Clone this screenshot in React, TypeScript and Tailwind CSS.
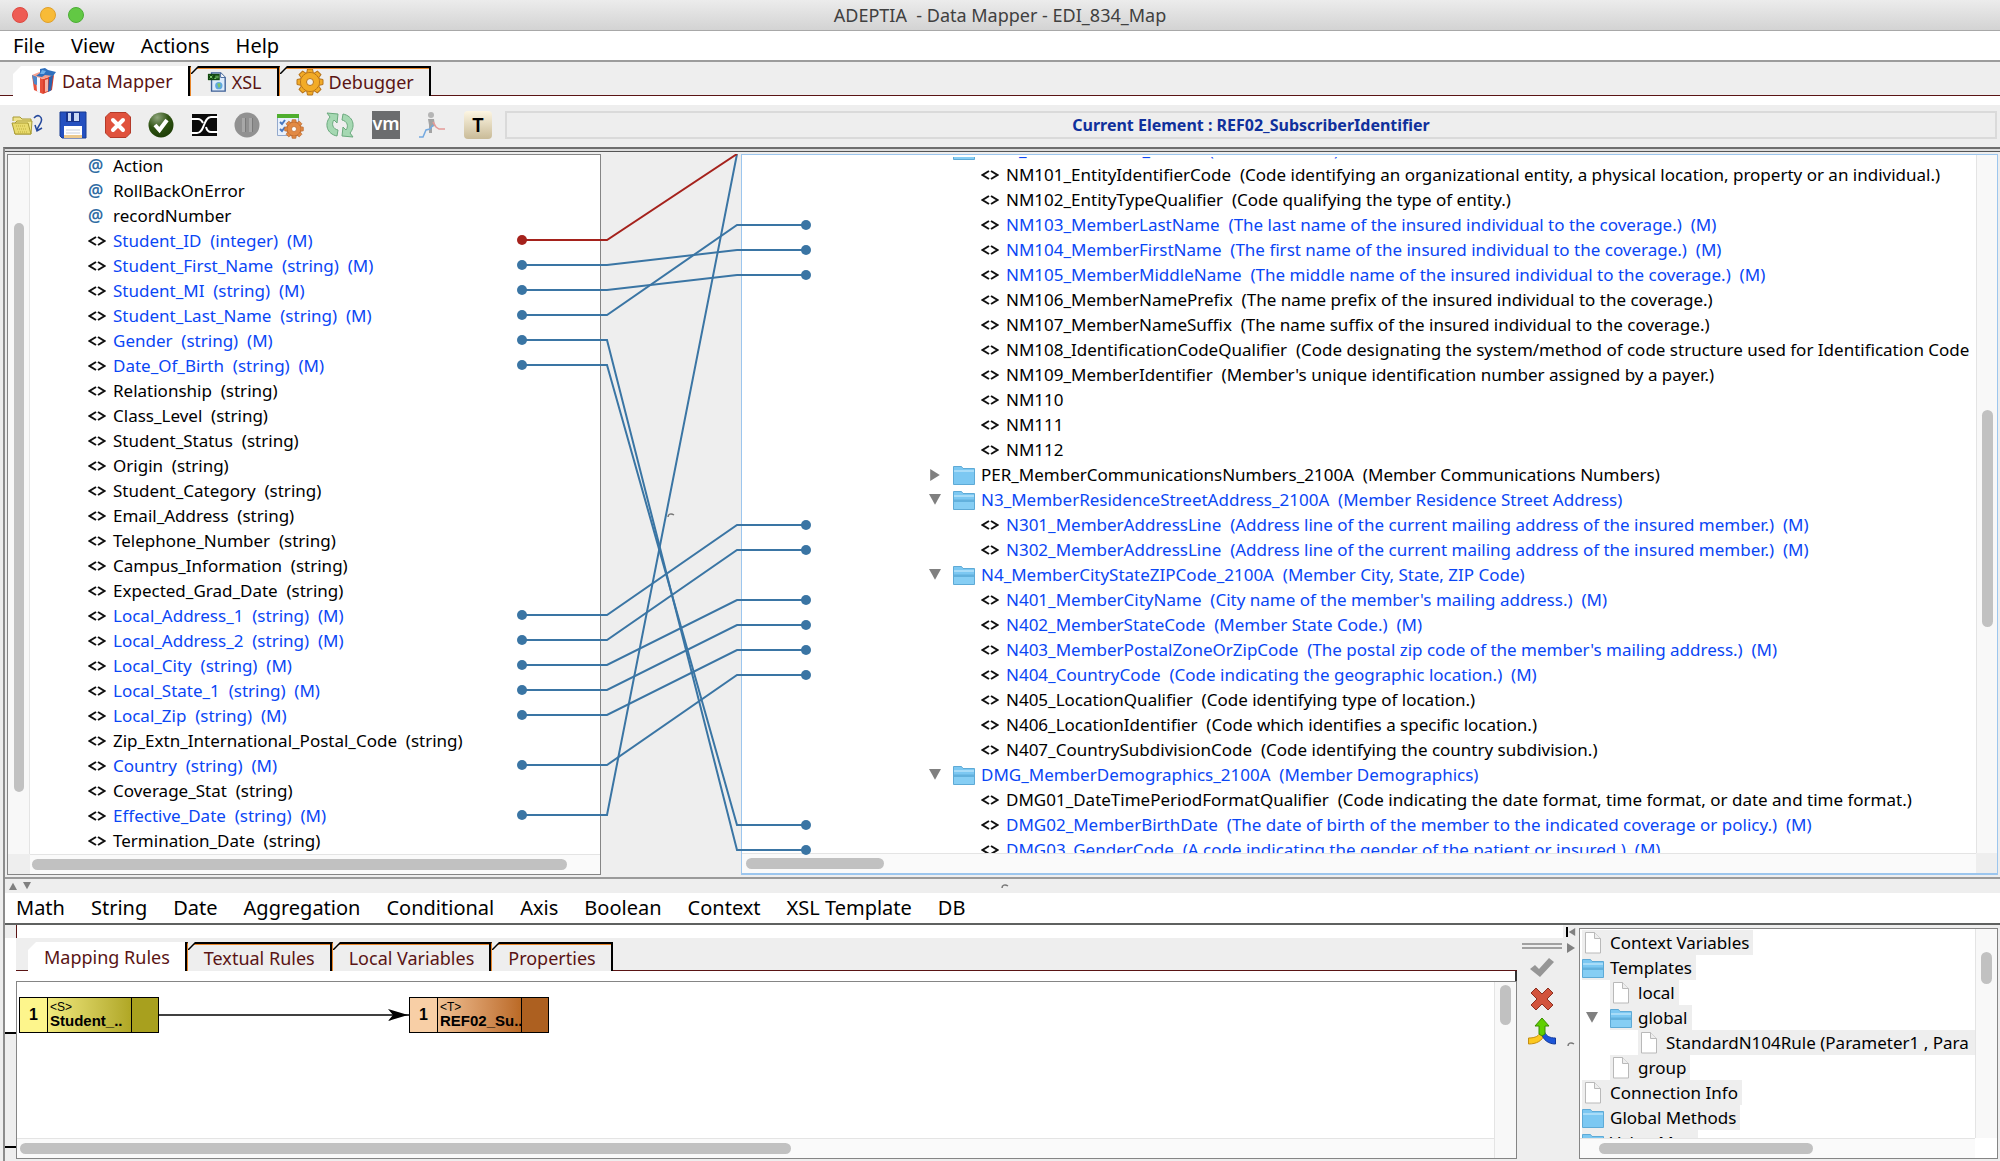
import { useState, type ReactNode } from 'react'
import clsx from 'clsx'

type Row = { name: string; info?: string; kind?: 'attr' | 'element' | 'open' | 'closed'; mapped?: boolean }

const ROW_HEIGHT = 25

const sourceRows: Row[] = [
  { name: 'Action', kind: 'attr' },
  { name: 'RollBackOnError', kind: 'attr' },
  { name: 'recordNumber', kind: 'attr' },
  { name: 'Student_ID', info: '(integer)', mapped: true },
  { name: 'Student_First_Name', info: '(string)', mapped: true },
  { name: 'Student_MI', info: '(string)', mapped: true },
  { name: 'Student_Last_Name', info: '(string)', mapped: true },
  { name: 'Gender', info: '(string)', mapped: true },
  { name: 'Date_Of_Birth', info: '(string)', mapped: true },
  { name: 'Relationship', info: '(string)' },
  { name: 'Class_Level', info: '(string)' },
  { name: 'Student_Status', info: '(string)' },
  { name: 'Origin', info: '(string)' },
  { name: 'Student_Category', info: '(string)' },
  { name: 'Email_Address', info: '(string)' },
  { name: 'Telephone_Number', info: '(string)' },
  { name: 'Campus_Information', info: '(string)' },
  { name: 'Expected_Grad_Date', info: '(string)' },
  { name: 'Local_Address_1', info: '(string)', mapped: true },
  { name: 'Local_Address_2', info: '(string)', mapped: true },
  { name: 'Local_City', info: '(string)', mapped: true },
  { name: 'Local_State_1', info: '(string)', mapped: true },
  { name: 'Local_Zip', info: '(string)', mapped: true },
  { name: 'Zip_Extn_International_Postal_Code', info: '(string)' },
  { name: 'Country', info: '(string)', mapped: true },
  { name: 'Coverage_Stat', info: '(string)' },
  { name: 'Effective_Date', info: '(string)', mapped: true },
  { name: 'Termination_Date', info: '(string)' },
]

const targetRows: Row[] = [
  { name: 'NM1_MemberName_2100A', info: '(Member Name)', kind: 'open', mapped: true },
  { name: 'NM101_EntityIdentifierCode', info: '(Code identifying an organizational entity, a physical location, property or an individual.)' },
  { name: 'NM102_EntityTypeQualifier', info: '(Code qualifying the type of entity.)' },
  { name: 'NM103_MemberLastName', info: '(The last name of the insured individual to the coverage.)', mapped: true },
  { name: 'NM104_MemberFirstName', info: '(The first name of the insured individual to the coverage.)', mapped: true },
  { name: 'NM105_MemberMiddleName', info: '(The middle name of the insured individual to the coverage.)', mapped: true },
  { name: 'NM106_MemberNamePrefix', info: '(The name prefix of the insured individual to the coverage.)' },
  { name: 'NM107_MemberNameSuffix', info: '(The name suffix of the insured individual to the coverage.)' },
  { name: 'NM108_IdentificationCodeQualifier', info: '(Code designating the system/method of code structure used for Identification Code' },
  { name: 'NM109_MemberIdentifier', info: "(Member's unique identification number assigned by a payer.)" },
  { name: 'NM110' },
  { name: 'NM111' },
  { name: 'NM112' },
  { name: 'PER_MemberCommunicationsNumbers_2100A', info: '(Member Communications Numbers)', kind: 'closed' },
  { name: 'N3_MemberResidenceStreetAddress_2100A', info: '(Member Residence Street Address)', kind: 'open', mapped: true },
  { name: 'N301_MemberAddressLine', info: '(Address line of the current mailing address of the insured member.)', mapped: true },
  { name: 'N302_MemberAddressLine', info: '(Address line of the current mailing address of the insured member.)', mapped: true },
  { name: 'N4_MemberCityStateZIPCode_2100A', info: '(Member City, State, ZIP Code)', kind: 'open', mapped: true },
  { name: 'N401_MemberCityName', info: "(City name of the member's mailing address.)", mapped: true },
  { name: 'N402_MemberStateCode', info: '(Member State Code.)', mapped: true },
  { name: 'N403_MemberPostalZoneOrZipCode', info: "(The postal zip code of the member's mailing address.)", mapped: true },
  { name: 'N404_CountryCode', info: '(Code indicating the geographic location.)', mapped: true },
  { name: 'N405_LocationQualifier', info: '(Code identifying type of location.)' },
  { name: 'N406_LocationIdentifier', info: '(Code which identifies a specific location.)' },
  { name: 'N407_CountrySubdivisionCode', info: '(Code identifying the country subdivision.)' },
  { name: 'DMG_MemberDemographics_2100A', info: '(Member Demographics)', kind: 'open', mapped: true },
  { name: 'DMG01_DateTimePeriodFormatQualifier', info: '(Code indicating the date format, time format, or date and time format.)' },
  { name: 'DMG02_MemberBirthDate', info: '(The date of birth of the member to the indicated coverage or policy.)', mapped: true },
  { name: 'DMG03_GenderCode', info: '(A code indicating the gender of the patient or insured.)', mapped: true },
]

// [source row, target row], -1 = target is scrolled out above the view
const links: [number, number][] = [
  [4, 4],
  [5, 5],
  [6, 3],
  [7, 28],
  [8, 27],
  [18, 15],
  [19, 16],
  [20, 18],
  [21, 19],
  [22, 20],
  [24, 21],
  [26, -1],
  [3, -1],
]

const functionMenus = ['Math', 'String', 'Date', 'Aggregation', 'Conditional', 'Axis', 'Boolean', 'Context', 'XSL Template', 'DB']

/* ---------- small icons ---------- */

function FolderIcon({ open = false }: { open?: boolean }) {
  return (
    <svg viewBox="0 0 22 20" className="h-5 w-[22px] shrink-0">
      <path d="M0.5 19.5V1.5h8l1.5 2h11.5v16z" fill="#7cc8f2" stroke="#5eaad6" />
      <path d="M1 5h20v2H1z" fill="#a8dcf8" />
      {open && <path d="M1 9.500h20V19H1z" fill="#62b1dd" />}
      {open && <path d="M1 12h20v7H1z" fill="#86cef4" />}
    </svg>
  )
}

function FileIcon() {
  return (
    <svg viewBox="0 0 22 24" className="h-6 w-[22px] shrink-0">
      <path d="M3.500 1.500h9l6 6v14.500h-15z" fill="#fff" stroke="#b9b9b9" />
      <path d="M12.500 1.500v6h6" fill="#eee" stroke="#b9b9b9" />
    </svg>
  )
}

function Triangle({ dir }: { dir: 'up' | 'down' | 'left' | 'right' }) {
  const points = {
    up: '0,10 10,10 5,1',
    down: '0,0 10,0 5,9',
    left: '9,0 9,10 1,5',
    right: '1,0 1,10 9,5',
  }
  return (
    <svg viewBox="0 0 10 10" className="size-full">
      <polygon points={points[dir]} fill="#808080" />
    </svg>
  )
}

// little grip mark in the middle of a splitter
function Grip() {
  return (
    <svg viewBox="0 0 8 6" className="h-1.5 w-2">
      <path d="M1 5c0-3 3-4 6-2" fill="none" stroke="#777" strokeWidth="1.500" />
    </svg>
  )
}

function MapperIcon() {
  return (
    <svg viewBox="0 0 28 28" className="size-7">
      <path d="M3 8l11 4v15L5 23z" fill="#e8503a" />
      <path d="M14 12l11-4-2 15-9 4z" fill="#d9412d" />
      <path d="M16 13l3-1v12l-3 1z" fill="#f6b5a6" />
      <path d="M3 8l10-4 12 4-11 4z" fill="#f7a08c" />
      <path d="M7 9.500l4 1.500v15l-3-1.500z" fill="#f4f8ff" />
      <path d="M3 8l5 2v8l-3-1z" fill="#4d87c9" />
      <path d="M20 10l4-1.500-2 15-3 1.500z" fill="#2a63ae" />
      <path d="M11 2l5-1 3 2 8 2-3 4-8-1-3 2-6-1 4-3z" fill="#2e6fbd" />
      <path d="M13 3l4 1-2 3-4 0z" fill="#6fb0ea" />
    </svg>
  )
}

function XslIcon() {
  return (
    <svg viewBox="0 0 22 24" className="h-6 w-5">
      <path d="M5 2h10l5 5v15H5z" fill="#dcebfb" stroke="#3c5f96" strokeWidth="1.500" />
      <path d="M15 2v5h5" fill="#fff" stroke="#3c5f96" />
      <circle cx="13" cy="16" r="4" fill="#5fa8e0" />
      <path d="M11 14l3-1 1 3-2 3z" fill="#7cc46a" />
      <path d="M1 3h13v7H1z" fill="#12470f" />
      <path d="M3 5l3 3M6 5L3 8M8 8h2V5M12 5v3" stroke="#8fe07a" fill="none" />
    </svg>
  )
}

function Gear({ className, color, stroke, hole }: { className?: string; color: string; stroke: string; hole: string }) {
  return (
    <svg viewBox="0 0 28 28" className={className}>
      <g fill={color} stroke={stroke}>
        {[0, 45, 90, 135, 180, 225, 270, 315].map((angle) => (
          <path key={angle} d="M10.500 6L11.500 1h5l1 5z" transform={`rotate(${angle} 14 14)`} />
        ))}
        <circle cx="14" cy="14" r="9.500" />
      </g>
      <circle cx="14" cy="14" r="9" fill={color} />
      <circle cx="14" cy="14" r="3.500" fill={hole} stroke={stroke} />
    </svg>
  )
}

function OpenIcon() {
  return (
    <svg viewBox="0 0 32 26" className="h-[26px] w-8">
      <path d="M2 9V5h7l2 2h9v4" fill="#efe38c" stroke="#a99b32" />
      <path d="M4 22V11l2-2h15l-1 13z" fill="#f2e88f" stroke="#a99b32" />
      <path d="M1 11h16l3 11H4z" fill="#e8da6c" stroke="#a99b32" />
      <path d="M5 14h10M6 17h10M7 20h10" stroke="#bfae3a" strokeDasharray="1 1" />
      <path d="M23 6c4-5 9-1 7 4-1 3-3 4-4 8M31 16l-5 3-2-6" fill="none" stroke="#24489c" strokeWidth="1.500" />
    </svg>
  )
}

function SaveIcon() {
  return (
    <svg viewBox="0 0 28 28" className="size-7">
      <path d="M1 1h26v26H3l-2-2z" fill="#2450c0" stroke="#173a90" />
      <path d="M7 1h14v10H7z" fill="#17338c" />
      <path d="M9 2h3v8H9zM15 2h5v8h-5z" fill="#c9d8f4" />
      <path d="M5 15h18v12H5z" fill="#fff" />
      <path d="M7 19h14M7 22h14" stroke="#c7cfdd" />
      <path d="M5 24h18v3H5z" fill="#ecc98d" />
    </svg>
  )
}

function CloseIcon() {
  return (
    <svg viewBox="0 0 28 28" className="size-7">
      <path d="M6 1.500h16l4.500 4.500v16L22 26.500H6L1.500 22V6z" fill="#e0523d" stroke="#b33a29" strokeLinejoin="round" />
      <path d="M9 9l10 10M19 9L9 19" stroke="#fff" strokeWidth="4" strokeLinecap="round" />
    </svg>
  )
}

function ValidateIcon() {
  return (
    <svg viewBox="0 0 28 28" className="size-7">
      <defs>
        <radialGradient id="ok" cx="0.35" cy="0.2" r="0.9">
          <stop offset="0" stopColor="#8fa67c" />
          <stop offset="0.5" stopColor="#2e5212" />
          <stop offset="1" stopColor="#1b3a05" />
        </radialGradient>
      </defs>
      <circle cx="14" cy="14" r="12.500" fill="url(#ok)" />
      <path d="M8 14l4.500 5L20 9" fill="none" stroke="#fff" strokeWidth="4" />
    </svg>
  )
}

function AutoMapIcon() {
  return (
    <svg viewBox="0 0 28 28" className="size-7">
      <path d="M2 3h25v22H2z" fill="#0a0a0a" />
      <path
        d="M1 22h6c8 0 6-16 14-16h7M1 8h7c3 0 4 2 5 4M16 16c1 4 3 5 5 5h7"
        fill="none"
        stroke="#fff"
        strokeWidth="2"
      />
    </svg>
  )
}

function PauseIcon() {
  return (
    <svg viewBox="0 0 28 28" className="size-7">
      <circle cx="14" cy="14" r="12.500" fill="#919191" />
      <path d="M10.500 7v14M17.500 7v14" stroke="#a8a8a8" strokeWidth="3" />
      <path d="M12.500 7v14M19.500 7v14" stroke="#7a7a7a" />
    </svg>
  )
}

function ScheduleIcon() {
  return (
    <span className="relative block size-7">
      <svg viewBox="0 0 28 28" className="size-7">
        <path d="M1.500 4.500h21v20h-21z" fill="#e9f1fc" stroke="#93a9cc" />
        <path d="M1 3h22v4H1z" fill="#4fae2e" />
        <path d="M4 11l2 2 3-4M4 18l2 2 3-4" fill="none" stroke="#4878c0" strokeWidth="2" />
        <path d="M11 12h8M11 16h4" stroke="#9db9e4" strokeWidth="2" />
      </svg>
      <span className="absolute right-0 bottom-0">
        <Gear className="size-5" color="#e28a45" stroke="#b8662a" hole="#fff" />
      </span>
    </span>
  )
}

function RefreshIcon() {
  return (
    <svg viewBox="0 0 30 28" className="h-7 w-[30px]">
      <g fill="#a5d8b2" stroke="#6aa97d">
        <path d="M2 2l11 1-1 9-3-3c-3 4-1 9 4 10l-1 6C2 23-1 13 5 6z" />
        <path d="M28 26l-11-1 1-9 3 3c3-4 1-9-4-10l1-6c10 2 13 12 7 19z" />
      </g>
    </svg>
  )
}

function TraceIcon() {
  return (
    <svg viewBox="0 0 28 28" className="size-7">
      <circle cx="13" cy="4" r="3" fill="#b5b5b5" />
      <path d="M10 8h6l1 7-3 1v6h-3v-8z" fill="#a3a3a3" />
      <path d="M1 26h4l3-7 4-1 3-4" fill="none" stroke="#74a9e0" strokeWidth="1.500" />
      <path d="M15 11l3 5 3 2h6" fill="none" stroke="#e59a98" strokeWidth="1.500" />
    </svg>
  )
}

/* ---------- shared pieces ---------- */

function ToolButton({ label, wide = false, children }: { label: string; wide?: boolean; children: ReactNode }) {
  return (
    <button type="button" aria-label={label} className={clsx('flex h-10 items-center justify-center', wide ? 'w-[46px]' : 'w-[43px]')}>
      {children}
    </button>
  )
}

function Tab({ label, icon, active, onClick }: { label: string; icon?: ReactNode; active: boolean; onClick: () => void }) {
  return (
    <button
      type="button"
      role="tab"
      aria-selected={active}
      onClick={onClick}
      className={clsx(
        'relative flex h-full items-center gap-[5px] border-r-2 border-black pr-[15px] pl-4 text-lg leading-6 whitespace-nowrap text-[#5a1414]',
        active ? 'bg-white' : 'border-t-2 border-l border-l-[#e8862a] bg-[#eeeeee]',
      )}
    >
      {!active && <span className="absolute inset-x-0 top-0 h-px bg-[#e8862a]" />}
      {/* cut corner */}
      <svg viewBox="0 0 8 8" className={clsx('absolute left-0 size-2', active ? 'top-0' : '-top-0.5')}>
        <path d="M0 0h8L0 8z" fill="#eeeeee" />
        {!active && <path d="M0 8L8 0" stroke="#000" strokeWidth="1.500" />}
      </svg>
      {icon}
      {label}
    </button>
  )
}

function TreeRow({ row, folderPad, leafPad }: { row: Row; folderPad: string; leafPad: string }) {
  const kind = row.kind ?? 'element'
  const isFolder = kind === 'open' || kind === 'closed'
  const text = [row.name, row.info, row.mapped && !isFolder ? '(M)' : undefined].filter(Boolean).join('  ')
  return (
    <li role="treeitem" className={clsx('flex h-[25px] shrink-0 items-center', isFolder ? folderPad : leafPad)}>
      {isFolder ? (
        <>
          <button type="button" aria-label={`Toggle ${row.name}`} className="mr-3 size-3">
            <Triangle dir={kind === 'open' ? 'down' : 'right'} />
          </button>
          <FolderIcon open={kind === 'open'} />
          <span className="w-[6px] shrink-0" />
        </>
      ) : kind === 'attr' ? (
        <span className="w-[25px] shrink-0 leading-none font-semibold text-[#2f6ca3]">@</span>
      ) : (
        <svg viewBox="0 0 18 10" className="mr-[7px] h-[10px] w-[18px] shrink-0">
          <path d="M8 1L1.500 5L8 9M10 1L16.500 5L10 9" fill="none" stroke="#111" strokeWidth="2" />
        </svg>
      )}
      <span className={clsx('whitespace-pre', row.mapped ? 'text-[#0a46f5]' : 'text-black')}>{text}</span>
    </li>
  )
}

function Links() {
  const sourceY = (i: number) => i * ROW_HEIGHT + 11
  const targetY = (i: number) => i * ROW_HEIGHT - 4
  return (
    <svg className="pointer-events-none absolute top-0 left-[507px] h-full w-[300px]">
      {links.map(([from, to]) => {
        const color = from === 3 ? '#a5221c' : '#3a75a4'
        const y1 = sourceY(from)
        const y2 = to < 0 ? 0 : targetY(to)
        return (
          <g key={from} stroke={color} fill={color} strokeWidth="2">
            <path d={`M8 ${y1}H93L223 ${y2}${to < 0 ? '' : 'H292'}`} fill="none" />
            <circle cx="8" cy={y1} r="5" stroke="none" />
            {to >= 0 && <circle cx="292" cy={y2} r="5" stroke="none" />}
          </g>
        )
      })}
    </svg>
  )
}

function RuleNode({ tag, label, className, parts }: { tag: string; label: string; className: string; parts: [string, string, string] }) {
  return (
    <div className={clsx('absolute top-[15px] flex h-9 w-[140px] border border-black font-["Liberation_Sans",Arial,sans-serif] text-black', className)}>
      <div className={clsx('flex w-7 items-center justify-center border-r border-black text-base font-bold', parts[0])}>1</div>
      <div className={clsx('flex w-[84px] flex-col justify-center border-r border-black pl-0.5', parts[1])}>
        <span className="text-xs leading-3">{tag}</span>
        <span className="text-[15px] leading-4 font-bold whitespace-nowrap">{label}</span>
      </div>
      <div className={clsx('flex-1', parts[2])} />
    </div>
  )
}

function ContextRow({ label, icon, pad, toggle, fill }: { label: string; icon: 'file' | 'open' | 'closed'; pad: string; toggle?: boolean; fill?: boolean }) {
  return (
    <li role="treeitem" className={clsx('flex h-[25px] shrink-0 items-center', pad)}>
      {toggle && (
        <button type="button" aria-label={`Toggle ${label}`} className="mr-3 ml-1 size-3">
          <Triangle dir="down" />
        </button>
      )}
      <span className={clsx('flex h-[25px] items-center gap-1.5 bg-[#eeeeee] pr-1 whitespace-nowrap', fill && 'flex-1')}>
        {icon === 'file' ? <FileIcon /> : <FolderIcon open={icon === 'open'} />}
        {label}
      </span>
    </li>
  )
}

export default function App() {
  const [mainTab, setMainTab] = useState('Data Mapper')
  const [ruleTab, setRuleTab] = useState('Mapping Rules')

  return (
    <div className='flex h-screen flex-col overflow-hidden bg-[#eeeeee] font-["Noto_Sans","Open_Sans",sans-serif] text-[17px] leading-6 text-black'>
      {/* title bar */}
      <header className="relative flex h-[31px] shrink-0 items-center justify-center border-b border-[#a8a8a8] bg-linear-to-b from-[#ececec] to-[#d3d3d3]">
        <div className="absolute left-3 flex gap-3">
          <button type="button" aria-label="Close" className="size-4 rounded-full border border-[#dd4a42] bg-[#ee5c54]" />
          <button type="button" aria-label="Minimize" className="size-4 rounded-full border border-[#e0a02a] bg-[#f8bb37]" />
          <button type="button" aria-label="Zoom" className="size-4 rounded-full border border-[#4cae36] bg-[#62c844]" />
        </div>
        <h1 className="text-lg leading-6 whitespace-pre text-[#404040]">{'ADEPTIA  - Data Mapper - EDI_834_Map'}</h1>
      </header>

      {/* menu bar */}
      <nav className="flex h-[31px] shrink-0 items-center gap-[26px] border-b-2 border-[#9c9c9c] bg-white px-[13px] text-xl leading-7">
        {['File', 'View', 'Actions', 'Help'].map((item) => (
          <button key={item} type="button">{item}</button>
        ))}
      </nav>

      <div role="tablist" className="flex h-[34px] shrink-0 items-stretch pt-1">
        <div className="w-[13px] border-b border-[#5a1414]" />
        <Tab label="Data Mapper" icon={<MapperIcon />} active={mainTab === 'Data Mapper'} onClick={() => setMainTab('Data Mapper')} />
        <Tab label="XSL" icon={<XslIcon />} active={mainTab === 'XSL'} onClick={() => setMainTab('XSL')} />
        <Tab
          label="Debugger"
          icon={<Gear className="size-7" color="#f2ab27" stroke="#b8741a" hole="#eeeeee" />}
          active={mainTab === 'Debugger'}
          onClick={() => setMainTab('Debugger')}
        />
        <div className="flex-1 border-b border-[#5a1414]" />
      </div>
      <div className="h-[9px] shrink-0 bg-white" />

      {/* toolbar */}
      <div role="toolbar" className="flex h-[42px] shrink-0 items-center pb-0.5 pl-1">
        <ToolButton label="Open" wide><OpenIcon /></ToolButton>
        <ToolButton label="Save" wide><SaveIcon /></ToolButton>
        <ToolButton label="Close mapping"><CloseIcon /></ToolButton>
        <ToolButton label="Validate"><ValidateIcon /></ToolButton>
        <ToolButton label="Auto map"><AutoMapIcon /></ToolButton>
        <ToolButton label="Pause"><PauseIcon /></ToolButton>
        <ToolButton label="Schedule"><ScheduleIcon /></ToolButton>
        <span className="w-1.5" />
        <ToolButton label="Refresh" wide><RefreshIcon /></ToolButton>
        <ToolButton label="Virtual memory" wide>
          <span className="flex size-7 items-center justify-center bg-[#6b6c6e] pb-1 text-lg leading-none font-semibold text-white">vm</span>
        </ToolButton>
        <ToolButton label="Trace" wide><TraceIcon /></ToolButton>
        <ToolButton label="Text" wide>
          <span className="flex size-7 items-center justify-center rounded-sm bg-linear-to-b from-[#fdf6e3] to-[#c9bb98] text-xl leading-none font-semibold">T</span>
        </ToolButton>
        <div className="mr-[3px] ml-1 flex h-7 flex-1 items-center justify-center border-2 border-[#dadada] text-base font-bold text-[#10309c]">
          Current Element : REF02_SubscriberIdentifier
        </div>
      </div>

      <div className="ml-[3px] flex min-h-0 flex-1 flex-col border-t-2 border-l-2 border-t-[#6e6e6e] border-l-[#8c8c8c]">
        <div className="h-[3px] shrink-0 border-b border-[#555] bg-[#dcdcdc]" />

        {/* source tree, link canvas, target tree */}
        <main className="relative mt-0.5 ml-0.5 flex min-h-0 flex-1">
          <section className="flex w-[594px] shrink-0 border border-[#858585] bg-white">
            <div className="flex w-[22px] shrink-0 flex-col">
              <div className="flex-1 border-r border-[#e4e4e4] bg-[#f8f8f8] pt-[68px]">
                <div className="mx-auto h-[569px] w-[10px] rounded-full bg-[#c1c1c1]" />
              </div>
              <div className="h-5 bg-[#eeeeee]" />
            </div>
            <div className="flex min-w-0 flex-1 flex-col">
              <ul role="tree" aria-label="Source" className="flex min-h-0 flex-1 flex-col overflow-hidden">
                <li role="none" className="-mt-0.5" />
                {sourceRows.map((row) => (
                  <TreeRow key={row.name} row={row} folderPad="pl-10" leafPad="pl-[58px]" />
                ))}
              </ul>
              <div className="flex h-5 shrink-0 items-center border-t border-[#e4e4e4] bg-[#fafafa] pr-[33px] pl-0.5">
                <div className="h-[11px] flex-1 rounded-full bg-[#c1c1c1]" />
              </div>
            </div>
          </section>
          <div className="flex w-[140px] shrink-0 items-center justify-center">
            <Grip />
          </div>
          <section className="mr-0.5 flex min-w-0 flex-1 border border-b-2 border-[#9cc6ee] bg-white">
            <div className="flex min-w-0 flex-1 flex-col">
              <ul role="tree" aria-label="Target" className="flex min-h-0 flex-1 flex-col overflow-hidden border-t-2 border-white">
                <li role="none" className="-mt-5" />
                {targetRows.map((row) => (
                  <TreeRow key={row.name} row={row} folderPad="pl-[187px]" leafPad="pl-[239px]" />
                ))}
              </ul>
              <div className="flex h-5 shrink-0 items-center border-t border-[#e4e4e4] bg-[#fafafa] pl-1">
                <div className="h-[11px] w-[138px] rounded-full bg-[#c1c1c1]" />
              </div>
            </div>
            <div className="flex w-[21px] shrink-0 flex-col">
              <div className="flex-1 border-l border-[#e4e4e4] bg-[#f8f8f8] pt-[255px]">
                <div className="mx-auto h-[217px] w-[11px] rounded-full bg-[#c1c1c1]" />
              </div>
              <div className="h-5 bg-[#eeeeee]" />
            </div>
          </section>
          <Links />
        </main>

        {/* horizontal splitter */}
        <div className="mt-0.5 flex h-4 shrink-0 items-center border-t-2 border-[#9a9a9a] pl-1">
          <div className="flex flex-1 gap-1.5">
            <button type="button" aria-label="Collapse up" className="size-2"><Triangle dir="up" /></button>
            <button type="button" aria-label="Collapse down" className="size-2"><Triangle dir="down" /></button>
          </div>
          <Grip />
          <div className="flex-1" />
        </div>

        <nav className="flex h-[30px] shrink-0 items-center gap-[26px] bg-white px-[11px] text-xl leading-7">
          {functionMenus.map((item) => (
            <button key={item} type="button" className="whitespace-nowrap">{item}</button>
          ))}
        </nav>

        <div className="flex h-[238px] shrink-0 border-t-2 border-[#5f6160]">
          {/* ruler at the left of the rules */}
          <div className="flex w-[11px] shrink-0 flex-col">
            <div className="h-[13px]" />
            <div className="h-[96px] border-b-2 border-black bg-white" />
            <div className="h-[114px] border-b-2 border-black" />
          </div>

          <section className="flex min-w-0 flex-1 flex-col">
            <div className="h-[13px] shrink-0 border-l border-[#5a1414] bg-white" />
            <div className="flex min-h-0 flex-1">
              <div className="mb-0.5 flex min-w-0 flex-1 flex-col">
                <div role="tablist" className="flex h-[33px] shrink-0 items-stretch pt-1">
                  <div className="w-3 border-b border-[#5a1414]" />
                  {['Mapping Rules', 'Textual Rules', 'Local Variables', 'Properties'].map((label) => (
                    <Tab key={label} label={label} active={ruleTab === label} onClick={() => setRuleTab(label)} />
                  ))}
                  <div className="flex-1 border-b border-[#5a1414]" />
                </div>
                <div className="h-[10px] shrink-0 border-r-2 border-[#333] bg-white" />
                <div className="flex min-h-0 flex-1 border border-[#858585] bg-white">
                  <div className="flex min-w-0 flex-1 flex-col">
                    <div className="relative min-h-0 flex-1">
                      <RuleNode tag="<S>" label="Student_.." className="left-0.5" parts={['bg-[#fdf58c]', 'bg-linear-to-r from-[#f2ea7c] to-[#b0a724]', 'bg-[#a8a01e]']} />
                      <svg className="absolute top-6 left-[142px] h-[18px] w-[250px]" viewBox="0 0 250 18">
                        <path d="M0 9h250" stroke="#000" strokeWidth="1.500" />
                        <path d="M229 3l20 6-20 6 5-6z" />
                      </svg>
                      <RuleNode tag="<T>" label="REF02_Su.." className="left-[392px]" parts={['bg-[#f8cfa6]', 'bg-linear-to-r from-[#f0c193] to-[#bb6a25]', 'bg-[#ad6020]']} />
                    </div>
                    <div className="flex h-5 items-center border-t border-[#e4e4e4] bg-[#fafafa] pl-[3px]">
                      <div className="h-[11px] w-[771px] rounded-full bg-[#c1c1c1]" />
                    </div>
                  </div>
                  <div className="w-[22px] border-l border-[#e4e4e4] bg-[#f8f8f8] pt-[3px]">
                    <div className="mx-auto h-10 w-[11px] rounded-full bg-[#c1c1c1]" />
                  </div>
                </div>
              </div>

              <div role="toolbar" className="flex w-[46px] shrink-0 flex-col items-center pt-[5px] pl-1">
                <div className="h-[6px] w-10 border-y-2 border-[#a0a0a0]" />
                <button type="button" aria-label="Apply" className="mt-2">
                  <svg viewBox="0 0 26 22" className="h-[22px] w-[26px]">
                    <path d="M1 12l5-4 4 4L20 1l5 4-14 15z" fill="#969696" />
                  </svg>
                </button>
                <button type="button" aria-label="Delete rule" className="mt-2">
                  <svg viewBox="0 0 24 24" className="size-6">
                    <path d="M1 6l5-5 6 6 6-6 5 5-6 6 6 6-5 5-6-6-6 6-5-5 6-6z" fill="#d2533c" stroke="#8c2f20" />
                  </svg>
                </button>
                <button type="button" aria-label="Merge" className="mt-1.5">
                  <svg viewBox="0 0 28 28" className="size-7">
                    <path d="M0.500 21c7 0 11-2 12-7l4 3c-2 7-8 10-16 10z" fill="#fcc81e" stroke="#c58e10" />
                    <path d="M27.500 21c-6 0-9-2-11-6l-3 2c2 6 7 10 14 10z" fill="#1c55d8" stroke="#123a9c" />
                    <path d="M14 1l7 8h-4v8l-3 2-3-2V9H7z" fill="#5fd000" stroke="#3a8c00" />
                  </svg>
                </button>
              </div>
            </div>
          </section>

          {/* vertical splitter */}
          <div className="flex w-4 shrink-0 flex-col items-center justify-center">
            <div className="flex flex-1 flex-col gap-1.5 pt-0.5">
              <button type="button" aria-label="Collapse left" className="size-[10px] border-l-2 border-black"><Triangle dir="left" /></button>
              <button type="button" aria-label="Collapse right" className="size-[10px]"><Triangle dir="right" /></button>
            </div>
            <Grip />
            <div className="flex-1" />
          </div>

          <section className="mt-[3px] mr-0.5 mb-0.5 flex w-[419px] shrink-0 border border-[#858585] bg-white">
            <div className="flex min-w-0 flex-1 flex-col">
              <ul role="tree" aria-label="Context" className="flex min-h-0 flex-1 flex-col overflow-hidden pt-px pl-0.5">
                <ContextRow label="Context Variables" icon="file" pad="" />
                <ContextRow label="Templates" icon="open" pad="" />
                <ContextRow label="local" icon="file" pad="pl-7" />
                <ContextRow label="global" icon="open" pad="" toggle />
                <ContextRow label="StandardN104Rule (Parameter1 , Para" icon="file" pad="pl-14" fill />
                <ContextRow label="group" icon="file" pad="pl-7" />
                <ContextRow label="Connection Info" icon="file" pad="" />
                <ContextRow label="Global Methods" icon="closed" pad="" />
                <ContextRow label="Value Map" icon="closed" pad="" />
              </ul>
              <div className="flex h-5 shrink-0 items-center border-t border-[#e4e4e4] bg-[#fafafa] pl-[19px]">
                <div className="h-[11px] w-[214px] rounded-full bg-[#c1c1c1]" />
              </div>
            </div>
            <div className="mb-5 w-[22px] border-l border-[#e4e4e4] bg-[#f8f8f8] pt-[23px]">
              <div className="mx-auto h-8 w-[11px] rounded-full bg-[#c1c1c1]" />
            </div>
          </section>
        </div>
      </div>
    </div>
  )
}
